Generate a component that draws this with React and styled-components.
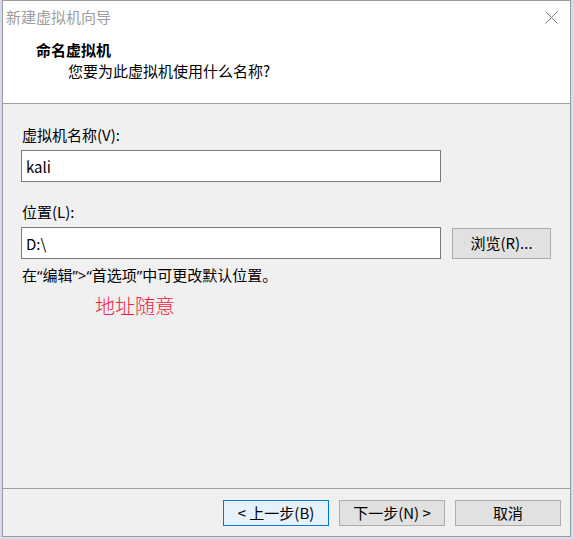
import React from "react";
import styled, { createGlobalStyle } from "styled-components";

const GlobalStyle = createGlobalStyle`
  html, body {
    margin: 0;
    padding: 0;
    background: #d3dbee;
  }
  body {
    width: 574px;
    height: 539px;
    overflow: hidden;
    font-family: "Noto Sans CJK SC", "Noto Sans", sans-serif;
  }
`;

const CloseIcon = () => (
  <svg width="13" height="13" viewBox="0 0 13 13">
    <path d="M0.5 0.5 L12.5 12.5 M12.5 0.5 L0.5 12.5" stroke="#7a7a7a" strokeWidth="1" fill="none" />
  </svg>
);

const App = () => {
  return (
    <>
      <GlobalStyle />
      <Window>
        <Header>
          <TitleBar>
            <Title>新建虚拟机向导</Title>
            <CloseBtn>
              <CloseIcon />
            </CloseBtn>
          </TitleBar>
          <Heading>命名虚拟机</Heading>
          <SubHeading>您要为此虚拟机使用什么名称?</SubHeading>
        </Header>

        <Body>
          <Label>虚拟机名称(V):</Label>
          <Field defaultValue="kali" />

          <Label $top={20}>位置(L):</Label>
          <FieldRow>
            <Field defaultValue="D:\" />
            <Button $width={99}>浏览(R)...</Button>
          </FieldRow>

          <Note>
            在<Latin>“</Latin>编辑<Latin>”&gt;“</Latin>首选项<Latin>”</Latin>中可更改默认位置。
          </Note>
          <Remark>地址随意</Remark>
        </Body>

        <Footer>
          <Button $focused>&lt;&nbsp;上一步(B)</Button>
          <Button>下一步(N)&nbsp;&gt;</Button>
          <Button>取消</Button>
        </Footer>
      </Window>
    </>
  );
};

export default App;

const Window = styled.div`
  box-sizing: border-box;
  margin-left: 2px;
  width: 569px;
  height: 537px;
  border: 1px solid #9b9b9b;
  background: #f0f0f0;
  display: flex;
  flex-direction: column;
  color: #000;
  font-size: 15px;
`;

const Header = styled.div`
  box-sizing: border-box;
  background: #fff;
  height: 103px;
  border-bottom: 1px solid #a0a0a0;
  flex-shrink: 0;
`;

const TitleBar = styled.div`
  height: 31px;
  display: flex;
  align-items: center;
  justify-content: space-between;
  padding: 0 12px 0 3px;
`;

const Title = styled.div`
  color: #9d9d9d;
  font-size: 15px;
  line-height: 20px;
`;

const CloseBtn = styled.div`
  display: flex;
  align-items: center;
  margin-top: 1px;
`;

const Heading = styled.div`
  margin: 8px 0 0 33px;
  font-weight: bold;
  line-height: 20px;
`;

const SubHeading = styled.div`
  margin-left: 65px;
  line-height: 22px;
`;

const Body = styled.div`
  flex: 1;
  min-height: 0;
  padding: 21px 18px 0;
  display: flex;
  flex-direction: column;
  align-items: flex-start;
`;

const Label = styled.div`
  margin: ${(p) => p.$top || 0}px 0 5px 1px;
  line-height: 20px;
`;

const FieldRow = styled.div`
  display: flex;
  align-items: center;
  gap: 11px;
`;

const Field = styled.input`
  box-sizing: border-box;
  width: 420px;
  height: 32px;
  border: 1px solid #7a7a7a;
  background: #fff;
  padding: 0 4px;
  font: inherit;
  font-size: 15px;
  color: #000;
  outline: none;
`;

const Note = styled.div`
  margin-top: 6px;
  line-height: 20px;
  margin-left: 1px;
`;

const Latin = styled.span`
  font-family: "Noto Sans", "Liberation Sans", sans-serif;
`;

const Remark = styled.div`
  margin: 9px 0 0 74px;
  color: #f2203e;
  font-size: 20px;
  line-height: 24px;
  font-weight: 300;
`;

const Footer = styled.div`
  box-sizing: border-box;
  flex-shrink: 0;
  height: 48px;
  border-top: 1px solid #a0a0a0;
  display: flex;
  justify-content: flex-end;
  align-items: flex-start;
  gap: 10px;
  padding: 11px 9px 0 0;
`;

const Button = styled.div`
  box-sizing: border-box;
  width: ${(p) => p.$width || 106}px;
  height: ${(p) => (p.$width ? 31 : 26)}px;
  display: flex;
  align-items: center;
  justify-content: center;
  background: ${(p) => (p.$focused ? "#e5f1fb" : "#e1e1e1")};
  border: 1px solid ${(p) => (p.$focused ? "#0078d7" : "#adadad")};
  font-size: 15px;
  line-height: 20px;
  cursor: default;
`;
